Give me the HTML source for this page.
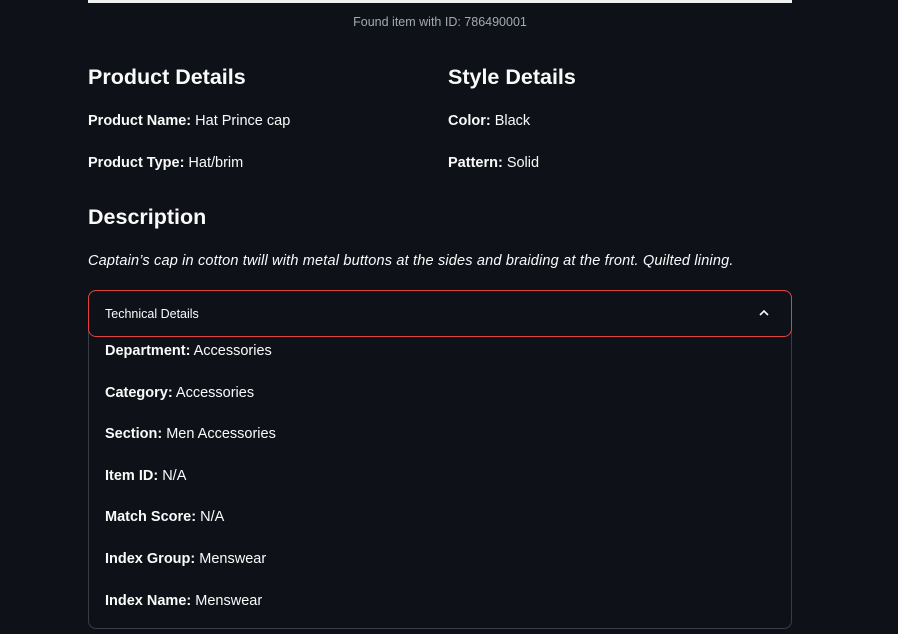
<!DOCTYPE html>
<html><head><meta charset="utf-8"><style>
*{margin:0;padding:0;box-sizing:border-box}
body{width:898px;height:634px;background:#0e1117;color:#fafafa;font-family:"Liberation Sans",sans-serif;position:relative;overflow:hidden}
.a{position:absolute;white-space:nowrap}
.h{font-size:21.5px;font-weight:bold;letter-spacing:0}
.t{font-size:14.5px;letter-spacing:0}
b{font-weight:bold}
</style></head><body>
<div class="a" style="left:88px;top:0;width:704px;height:3px;background:#f0f0f0"></div>
<div class="a" style="left:0;width:880px;top:15px;text-align:center;font-size:12.5px;color:#a3a8b4">Found item with ID: 786490001</div>
<div class="a h" style="left:88px;top:65px">Product Details</div>
<div class="a h" style="left:448px;top:65px">Style Details</div>
<div class="a t" style="left:88px;top:113px"><b>Product Name:</b> Hat Prince cap</div>
<div class="a t" style="left:448px;top:113px"><b>Color:</b> Black</div>
<div class="a t" style="left:88px;top:155px"><b>Product Type:</b> Hat/brim</div>
<div class="a t" style="left:448px;top:155px"><b>Pattern:</b> Solid</div>
<div class="a h" style="left:88px;top:205px">Description</div>
<div class="a t" style="left:88px;top:253px;font-style:italic;letter-spacing:0.18px">Captain’s cap in cotton twill with metal buttons at the sides and braiding at the front. Quilted lining.</div>
<div class="a" style="left:88px;top:290px;width:704px;height:339px;border:1px solid #3a3d45;border-radius:8px"></div>
<div class="a" style="left:88px;top:290px;width:704px;height:47px;border:1px solid #e0413f;border-radius:8px"></div>
<div class="a" style="left:105px;top:307px;font-size:12.5px">Technical Details</div>
<svg class="a" style="left:758px;top:308px" width="12" height="10" viewBox="0 0 12 10"><path d="M2 7 L6 3 L10 7" stroke="#fafafa" stroke-width="1.6" fill="none"/></svg>
<div class="a t" style="left:105px;top:343px"><b>Department:</b> Accessories</div>
<div class="a t" style="left:105px;top:385px"><b>Category:</b> Accessories</div>
<div class="a t" style="left:105px;top:426px"><b>Section:</b> Men Accessories</div>
<div class="a t" style="left:105px;top:468px"><b>Item ID:</b> N/A</div>
<div class="a t" style="left:105px;top:509px"><b>Match Score:</b> N/A</div>
<div class="a t" style="left:105px;top:551px"><b>Index Group:</b> Menswear</div>
<div class="a t" style="left:105px;top:593px"><b>Index Name:</b> Menswear</div>
</body></html>
